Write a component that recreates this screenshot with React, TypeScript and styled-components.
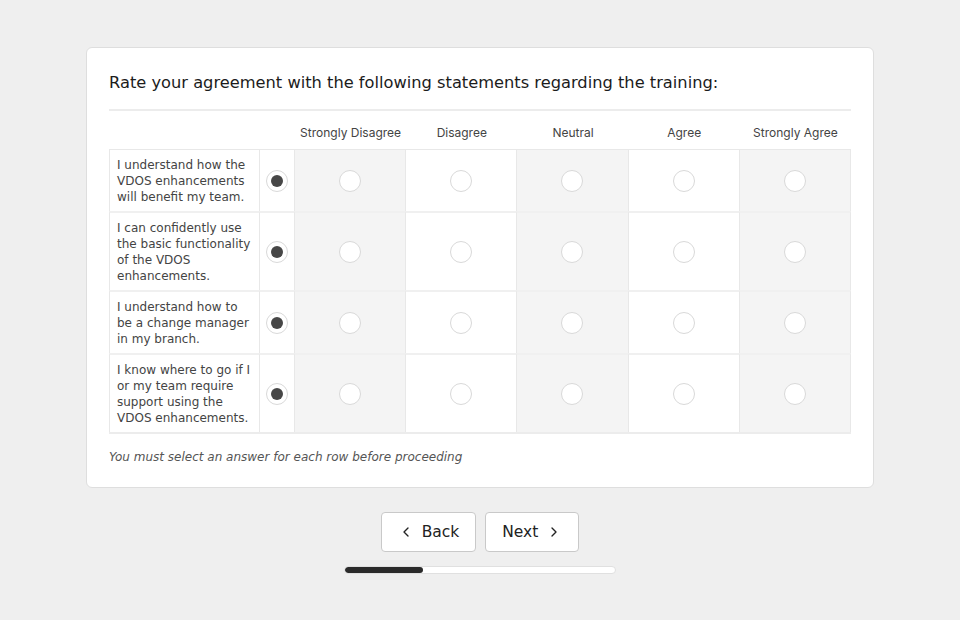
import React, { FC } from 'react';
import styled, { createGlobalStyle } from 'styled-components';
import { ChevronLeft, ChevronRight } from 'lucide-react';

const GlobalStyle = createGlobalStyle`
  html, body {
    margin: 0;
    padding: 0;
    background: #efefef;
  }
  body {
    font-family: "DejaVu Sans", "Noto Sans", sans-serif;
    color: #222;
  }
`;

const Page = styled.main`
  display: flex;
  flex-direction: column;
  align-items: center;
  padding-top: 47px;
  width: 960px;
  height: 620px;
  box-sizing: border-box;
`;

const Card = styled.section`
  width: 788px;
  box-sizing: border-box;
  background: #fff;
  border: 1px solid #dedede;
  border-radius: 6px;
  padding: 24px 22px 23px;
`;

const Heading = styled.h2`
  margin: 0;
  padding-bottom: 15px;
  border-bottom: 2px solid #ececec;
  font-size: 16.25px;
  font-weight: 400;
  color: #1c1c1c;
  line-height: 22px;
`;

const Grid = styled.div`
  display: grid;
  grid-template-columns: 151px 35px repeat(5, 1fr);
  margin-top: 6px;
`;

const ColHead = styled.div`
  font-family: Inter, "Liberation Sans", sans-serif;
  font-size: 12px;
  color: #444;
  text-align: center;
  height: 32px;
  line-height: 32px;
`;

const Cell = styled.div<{ $shade?: boolean; $first?: boolean; $top?: boolean }>`
  display: flex;
  align-items: center;
  justify-content: center;
  background: ${({ $shade }) => ($shade ? '#f4f4f4' : '#fff')};
  border-top: ${({ $top }) => ($top ? '1px solid #e8e8e8' : '2px solid #f0f0f0')};
  border-right: 1px solid #e8e8e8;
  border-left: ${({ $first }) => ($first ? '1px solid #e8e8e8' : 'none')};
`;

const Statement = styled(Cell)`
  justify-content: flex-start;
  padding: 7px 7px 6px 7px;
  font-size: 12px;
  line-height: 16px;
  color: #444;
`;

const BottomEdge = styled.div`
  grid-column: 1 / -1;
  height: 0;
  border-top: 2px solid #ececec;
`;

const Radio = styled.span<{ $checked?: boolean }>`
  position: relative;
  width: 22px;
  height: 22px;
  box-sizing: border-box;
  border-radius: 50%;
  border: 1px solid #d9d9d9;
  background: #fff;

  &::after {
    content: '';
    display: ${({ $checked }) => ($checked ? 'block' : 'none')};
    position: absolute;
    left: 4px;
    top: 4px;
    width: 12px;
    height: 12px;
    border-radius: 50%;
    background: #474747;
  }
`;

const Note = styled.p`
  margin: 16px 0 0;
  font-size: 12px;
  line-height: 14px;
  font-style: italic;
  color: #555;
`;

const Nav = styled.nav`
  display: flex;
  gap: 9px;
  margin-top: 24px;
`;

const NavButton = styled.button`
  display: flex;
  align-items: center;
  gap: 8px;
  height: 40px;
  padding: 0 16px;
  box-sizing: border-box;
  border: 1px solid #c9c9c9;
  border-radius: 4px;
  background: #fff;
  font-family: "DejaVu Sans", sans-serif;
  font-size: 15.5px;
  color: #222;
`;

const Progress = styled.div`
  width: 272px;
  height: 8px;
  margin-top: 14px;
  box-sizing: border-box;
  border: 1px solid #e0e0e0;
  border-radius: 4px;
  background: #fff;
  overflow: hidden;
`;

const ProgressFill = styled.div`
  height: 100%;
  background: #2b2b2b;
  border-radius: 4px;
`;

const columns = ['Strongly Disagree', 'Disagree', 'Neutral', 'Agree', 'Strongly Agree'];

const statements = [
  'I understand how the VDOS enhancements will benefit my team.',
  'I can confidently use the basic functionality of the VDOS enhancements.',
  'I understand how to be a change manager in my branch.',
  'I know where to go if I or my team require support using the VDOS enhancements.',
];

const App: FC = () => (
  <>
    <GlobalStyle />
    <Page>
      <Card>
        <Heading>Rate your agreement with the following statements regarding the training:</Heading>
        <Grid>
          <ColHead />
          <ColHead />
          {columns.map((c) => (
            <ColHead key={c}>{c}</ColHead>
          ))}
          {statements.map((s, r) => (
            <React.Fragment key={s}>
              <Statement $first $top={r === 0}>{s}</Statement>
              <Cell $top={r === 0}>
                <Radio $checked />
              </Cell>
              {columns.map((c, i) => (
                <Cell key={c} $top={r === 0} $shade={i % 2 === 0}>
                  <Radio />
                </Cell>
              ))}
            </React.Fragment>
          ))}
          <BottomEdge />
        </Grid>
        <Note>You must select an answer for each row before proceeding</Note>
      </Card>
      <Nav>
        <NavButton>
          <ChevronLeft size={16} strokeWidth={2} />
          Back
        </NavButton>
        <NavButton>
          Next
          <ChevronRight size={16} strokeWidth={2} />
        </NavButton>
      </Nav>
      <Progress>
        <ProgressFill style={{ width: `${(1 / 3.45) * 100}%` }} />
      </Progress>
    </Page>
  </>
);

export default App;
